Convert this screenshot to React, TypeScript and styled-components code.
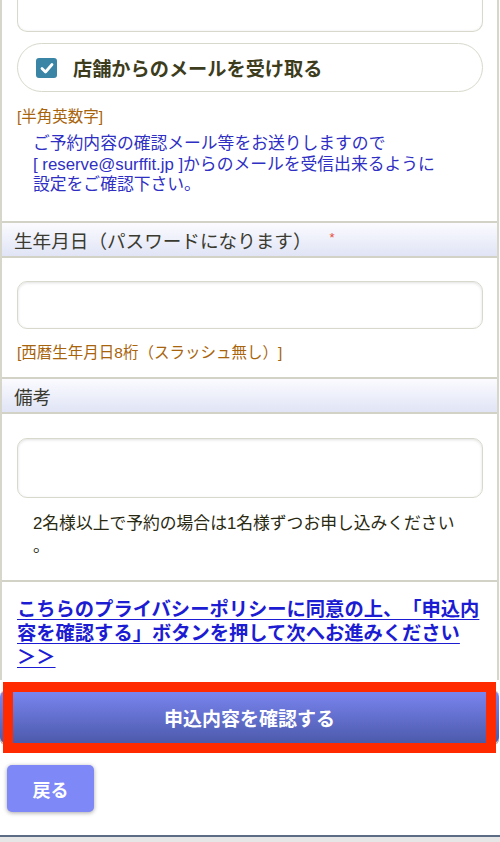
import * as React from "react";
import styled, { createGlobalStyle } from "styled-components";

const GlobalStyle = createGlobalStyle`
  html, body {
    margin: 0;
    padding: 0;
    background: #ffffff;
  }
  body {
    font-family: "Liberation Sans", "Noto Sans CJK JP", sans-serif;
    color: #333;
    text-spacing-trim: space-all;
  }
`;

const Page = styled.div`
  width: 500px;
  height: 842px;
  overflow: hidden;
  display: flex;
  flex-direction: column;
  background: #fff;
`;

const Form = styled.div`
  width: 499px;
  box-sizing: border-box;
  border-left: 2px solid #d6d6ca;
  border-right: 2px solid #d6d6ca;
  display: flex;
  flex-direction: column;
`;

const Cell = styled.div<{ $top?: number; $bottom?: number }>`
  padding: ${(p) => p.$top ?? 0}px 14px ${(p) => p.$bottom ?? 0}px 15px;
  display: flex;
  flex-direction: column;
`;

const Header = styled.div`
  height: 33px;
  border-top: 2px solid #d2d2c6;
  border-bottom: 2px solid #d2d2c6;
  background: linear-gradient(#fbfbff, #e0e4f5);
  display: flex;
  align-items: center;
  padding-left: 12px;
  font-size: 18.6px;
  color: #3a3a30;
`;

const Required = styled.span`
  color: #e84a3a;
  font-size: 13px;
  margin-left: 18px;
  margin-top: -3px;
`;

const CroppedInput = styled.div`
  height: 31px;
  border: 1.5px solid #d8d8cc;
  border-top: none;
  border-radius: 0 0 10px 10px;
  box-shadow: inset 0 -1px 2px rgba(0, 0, 0, 0.04);
`;

const Input = styled.div<{ $h: number }>`
  height: ${(p) => p.$h}px;
  box-sizing: border-box;
  border: 1.5px solid #d8d8cc;
  border-radius: 10px;
  box-shadow: inset 0 1px 3px rgba(0, 0, 0, 0.12);
  background: #fff;
`;

const CheckPill = styled.label`
  margin-top: 11px;
  height: 49px;
  box-sizing: border-box;
  border: 1.5px solid #d8d8cc;
  border-radius: 25px;
  display: flex;
  align-items: center;
  gap: 16px;
  padding-left: 18px;
  font-size: 19.2px;
  font-weight: bold;
  color: #3d3d1e;
`;

const CheckBox = styled.span`
  width: 21px;
  height: 20px;
  border-radius: 3px;
  background: #3a85a6;
  display: flex;
  align-items: center;
  justify-content: center;
`;

const Hint = styled.div<{ $top: number }>`
  margin-top: ${(p) => p.$top}px;
  font-size: 15.5px;
  line-height: 20px;
  color: #a8640c;
`;

const Note = styled.p<{ $color: string; $lh: number; $top: number }>`
  margin: ${(p) => p.$top}px 0 0;
  padding: 0 19px 0 16px;
  font-size: 16.8px;
  line-height: ${(p) => p.$lh}px;
  color: ${(p) => p.$color};
  line-break: anywhere;
`;

const LinkBlock = styled.div`
  border-top: 2px solid #d2d2c6;
  padding: 16px 10px 10px 15px;
`;

const PolicyLink = styled.a`
  font-size: 19.3px;
  line-height: 24.3px;
  font-weight: bold;
  color: #1c1cd2;
  text-decoration: underline;
  text-underline-offset: 3px;
`;

const NoWrap = styled.span`
  white-space: nowrap;
`;

const SubmitWrap = styled.div`
  position: relative;
  margin-top: 10px;
`;

const SubmitButton = styled.button`
  width: 499px;
  height: 55px;
  border: none;
  border-radius: 6px;
  background: linear-gradient(#7c86f2, #4a58a8);
  box-shadow: inset 0 1px 0 #e8e0d0, inset 0 -2px 0 #c8c0b8;
  color: #fff;
  font-family: inherit;
  font-size: 19px;
  font-weight: bold;
  display: block;
`;

const Highlight = styled.div`
  position: absolute;
  top: -8px;
  bottom: -8px;
  left: 3px;
  right: 4px;
  border: 10px solid #ff2a00;
  pointer-events: none;
`;

const BackRow = styled.div`
  padding: 20px 0 0 7px;
`;

const BackButton = styled.button`
  width: 87px;
  height: 47px;
  border: none;
  border-radius: 5px;
  background: #7e88f6;
  box-shadow: 0 1px 4px rgba(0, 0, 0, 0.35);
  color: #fff;
  font-family: inherit;
  font-size: 18px;
  font-weight: bold;
  display: block;
`;

const Footer = styled.div`
  margin-top: 23px;
  border-top: 2px solid #5c6c84;
  flex: 1;
  background: #e6e6e6;
`;

export default function App() {
  return (
    <Page>
      <GlobalStyle />
      <Form>
        <Cell $bottom={25}>
          <CroppedInput />
          <CheckPill>
            <CheckBox>
              <svg width="14" height="12" viewBox="0 0 14 12">
                <path d="M2 6.5 L5.5 10 L12 2.5" fill="none" stroke="#fff" strokeWidth="2.8" strokeLinecap="round" strokeLinejoin="round" />
              </svg>
            </CheckBox>
            店舗からのメールを受け取る
          </CheckPill>
          <Hint $top={15}>[半角英数字]</Hint>
          <Note $color="#2f2fc4" $lh={20.5} $top={7}>
            ご予約内容の確認メール等をお送りしますので
            <br />[ reserve@surffit.jp ]からのメールを受信出来るように
            <br />設定をご確認下さい。
          </Note>
        </Cell>
        <Header>
          生年月日（パスワードになります）<Required>*</Required>
        </Header>
        <Cell $top={23} $bottom={14}>
          <Input $h={48} />
          <Hint $top={14}>[西暦生年月日8桁（スラッシュ無し）]</Hint>
        </Cell>
        <Header>備考</Header>
        <Cell $top={24} $bottom={22}>
          <Input $h={60} />
          <Note $color="#2a2a12" $lh={23} $top={14}>
            2名様以上で予約の場合は1名様ずつお申し込みください。
          </Note>
        </Cell>
        <LinkBlock>
          <PolicyLink href="#">
            こちらのプライバシーポリシーに同意の上、「申込内容を確認する」ボタンを押して次へお進みください <NoWrap>＞＞</NoWrap>
          </PolicyLink>
        </LinkBlock>
      </Form>
      <SubmitWrap>
        <SubmitButton>申込内容を確認する</SubmitButton>
        <Highlight />
      </SubmitWrap>
      <BackRow>
        <BackButton>戻る</BackButton>
      </BackRow>
      <Footer />
    </Page>
  );
}
